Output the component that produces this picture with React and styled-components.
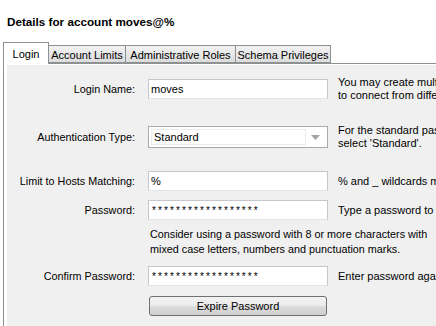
import React from "react";
import styled, { createGlobalStyle } from "styled-components";

const GlobalStyle = createGlobalStyle`
  html, body {
    margin: 0;
    padding: 0;
    background: #ffffff;
    overflow: hidden;
  }
  body {
    font-family: "Liberation Sans", Arial, sans-serif;
    font-size: 11px;
    color: #000000;
  }
`;

const tabs = [
  { label: "Login", width: 46, active: true },
  { label: "Account Limits", width: 77 },
  { label: "Administrative Roles", width: 110 },
  { label: "Schema Privileges", width: 95 },
];

function App() {
  return (
    <Page>
      <GlobalStyle />
      <Title>Details for account moves@%</Title>
      <TabBar>
        {tabs.map((t, idx) => (
          <Tab key={idx} $active={t.active} $w={t.width}>
            {t.label}
          </Tab>
        ))}
      </TabBar>
      <Panel>
        <Row $top={12}>
          <Label>Login Name:</Label>
          <Field defaultValue="moves" />
          <Help>
            You may create multiple accounts with the same name
            <br />
            to connect from different hosts.
          </Help>
        </Row>
        <Row $top={22}>
          <Label>Authentication Type:</Label>
          <Select>
            <SelectValue>Standard</SelectValue>
            <Arrow>
              <svg width="9" height="5" viewBox="0 0 9 5">
                <path d="M0 0 L9 0 L4.5 5 Z" fill="#a3a3a3" />
              </svg>
            </Arrow>
          </Select>
          <Help>
            For the standard password and/or host based authentication,
            <br />
            select 'Standard'.
          </Help>
        </Row>
        <Row $top={21}>
          <Label>Limit to Hosts Matching:</Label>
          <Field defaultValue="%" />
          <Help>% and _ wildcards may be used</Help>
        </Row>
        <Row $top={9}>
          <Label>Password:</Label>
          <Field $secret defaultValue="******************" />
          <Help>Type a password to reset it.</Help>
        </Row>
        <Row $top={7}>
          <span />
          <Note>
            Consider using a password with 8 or more characters with
            <br />
            mixed case letters, numbers and punctuation marks.
          </Note>
        </Row>
        <Row $top={9}>
          <Label>Confirm Password:</Label>
          <Field $secret defaultValue="******************" />
          <Help>Enter password again to confirm.</Help>
        </Row>
        <Row $top={10}>
          <span />
          <Button type="button">Expire Password</Button>
        </Row>
      </Panel>
    </Page>
  );
}

export default App;

const Page = styled.div`
  width: 436px;
  height: 326px;
  display: flex;
  flex-direction: column;
  overflow: hidden;
`;

const Title = styled.div`
  margin: 15px 0 0 7px;
  font-weight: bold;
  font-size: 11.7px;
  line-height: 14px;
  white-space: nowrap;
`;

const TabBar = styled.div`
  display: flex;
  align-items: flex-end;
  margin: 12px 0 0 3px;
  height: 22px;
  position: relative;
  z-index: 1;
`;

const Tab = styled.div`
  box-sizing: border-box;
  width: ${(p) => p.$w}px;
  height: ${(p) => (p.$active ? 22 : 18)}px;
  margin-bottom: ${(p) => (p.$active ? -1 : 0)}px;
  display: flex;
  align-items: center;
  justify-content: center;
  padding-top: ${(p) => (p.$active ? 0 : 1)}px;
  border: 1px solid #8e9192;
  border-bottom: ${(p) => (p.$active ? "none" : "1px solid #8e9192")};
  border-left: ${(p) => (p.$active ? "1px solid #8e9192" : "none")};
  background: ${(p) =>
    p.$active ? "#ffffff" : "linear-gradient(#f2f2f2, #dcdcdc)"};
  white-space: nowrap;
`;

const Panel = styled.div`
  flex: 1;
  margin-left: 3px;
  border-left: 1px solid #8e9192;
  border-top: 1px solid #8e9192;
  background: #f0f0f0;
  box-shadow: inset 3px 1px 0 #ffffff;
  display: flex;
  flex-direction: column;
`;

const Row = styled.div`
  display: grid;
  grid-template-columns: 131px 180px 1fr;
  column-gap: 13px;
  align-items: center;
  margin-top: ${(p) => p.$top}px;
  & > :nth-child(3) {
    margin-left: -3px;
  }
`;

const Label = styled.div`
  text-align: right;
  white-space: nowrap;
  font-size: 10.8px;
`;

const Help = styled.div`
  line-height: 13px;
  white-space: nowrap;
`;

const Note = styled.div`
  grid-column: 2 / 4;
  padding-left: 2px;
  line-height: 15px;
  font-size: 10.8px;
  white-space: nowrap;
`;

const Field = styled.input`
  box-sizing: border-box;
  width: 180px;
  height: 20px;
  margin: 0;
  padding: 0 2px 0 ${(p) => (p.$secret ? 3 : 2)}px;
  border: 1px solid #c6c7cb;
  border-bottom-color: #e1e4ea;
  background: #ffffff;
  font-family: "Liberation Sans", Arial, sans-serif;
  font-size: ${(p) => (p.$secret ? 10 : 11)}px;
  letter-spacing: ${(p) => (p.$secret ? "2.1px" : "normal")};
  color: #000000;
  outline: none;
`;

const Select = styled.div`
  box-sizing: border-box;
  width: 180px;
  height: 22px;
  display: flex;
  align-items: stretch;
  padding: 2px;
  border: 1px solid #a9a9a9;
  background: #ffffff;
`;

const SelectValue = styled.div`
  flex: 1;
  display: flex;
  align-items: center;
  padding-left: 2px;
  border: 1px solid #ececec;
`;

const Arrow = styled.div`
  width: 19px;
  display: flex;
  align-items: center;
  justify-content: center;
`;

const Button = styled.button`
  box-sizing: border-box;
  width: 178px;
  height: 20px;
  margin: 0 0 0 1px;
  padding: 0;
  border: 1px solid #707070;
  border-radius: 3px;
  background: linear-gradient(#f2f2f2 0%, #ebebeb 50%, #dddddd 51%, #cfcfcf 100%);
  font-family: "Liberation Sans", Arial, sans-serif;
  font-size: 11px;
  color: #000000;
`;
